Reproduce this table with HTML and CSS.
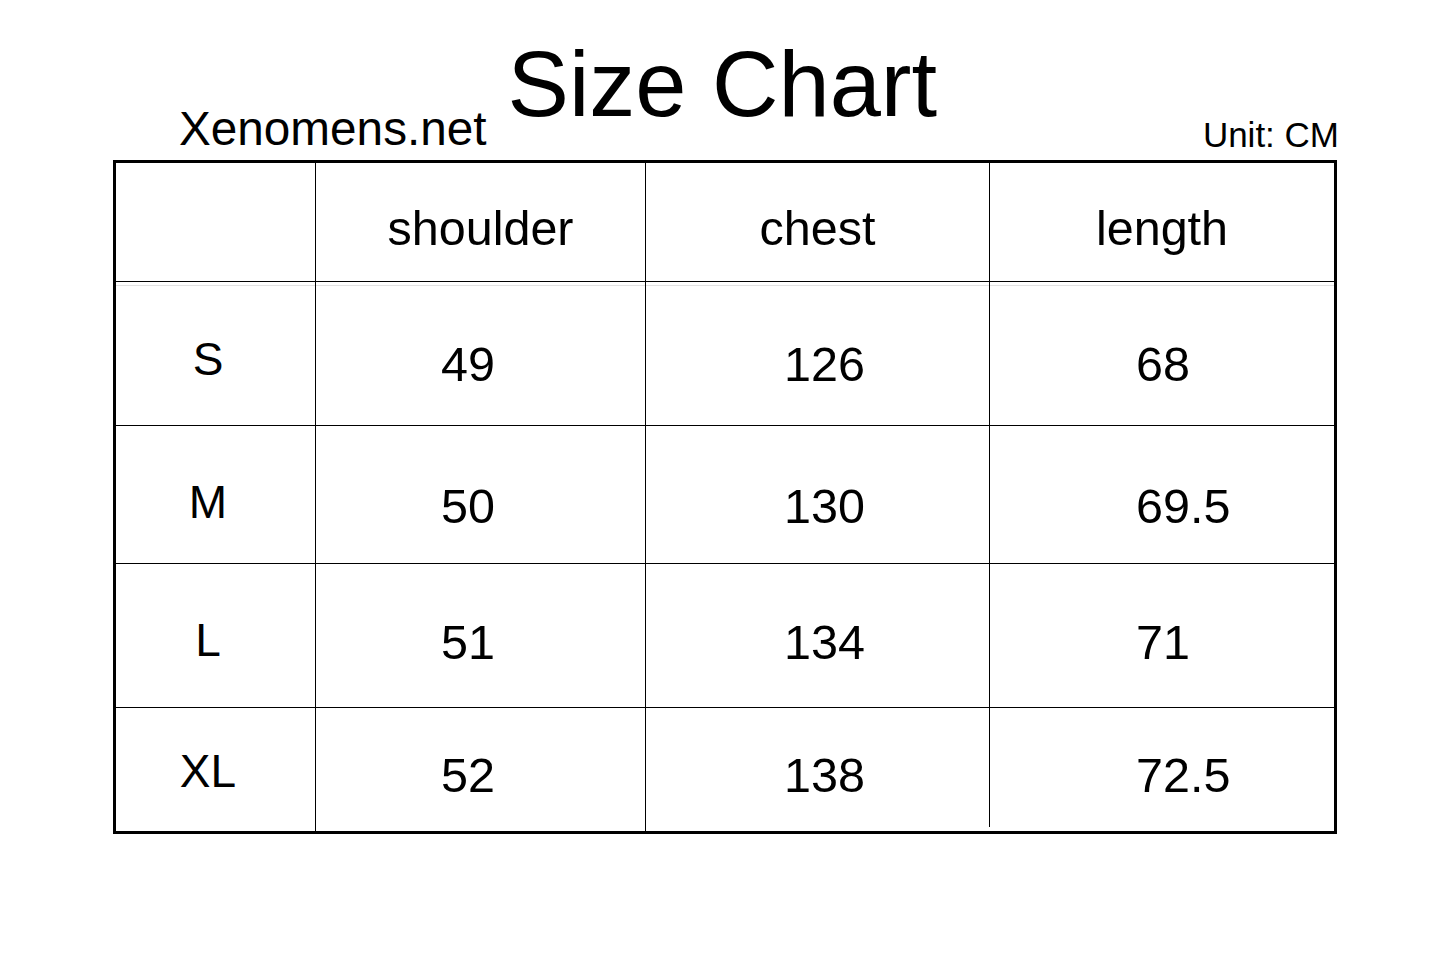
FILE: index.html
```html
<!DOCTYPE html>
<html lang="en">
<head>
<meta charset="utf-8">
<title>Size Chart</title>
<link rel="stylesheet" href="styles.css">
</head>
<body>
<div class="page">
  <header class="top">
    <div class="site">Xenomens.net</div>
    <h1 class="title">Size Chart</h1>
    <div class="unit">Unit: CM</div>
  </header>
  <div class="chart">
    <div class="cell head"></div>
    <div class="cell head">shoulder</div>
    <div class="cell head">chest</div>
    <div class="cell head">length</div>

    <div class="cell size r1 first">S</div>
    <div class="cell num c2 r1 first">49</div>
    <div class="cell num c3 r1 first">126</div>
    <div class="cell num c4 r1 first">68</div>

    <div class="cell size r2">M</div>
    <div class="cell num c2 r2">50</div>
    <div class="cell num c3 r2">130</div>
    <div class="cell num c4 r2">69.5</div>

    <div class="cell size r3">L</div>
    <div class="cell num c2 r3">51</div>
    <div class="cell num c3 r3">134</div>
    <div class="cell num c4 r3">71</div>

    <div class="cell size r4">XL</div>
    <div class="cell num c2 r4">52</div>
    <div class="cell num c3 r4">138</div>
    <div class="cell num c4 r4 last">72.5</div>
  </div>
</div>
</body>
</html>
```
FILE: styles.css
```css
html, body {
  margin: 0;
  padding: 0;
  background: #fff;
}
body {
  font-family: "Liberation Sans", Arial, sans-serif;
  color: #000;
}
.page {
  width: 1440px;
  height: 968px;
}
.top {
  box-sizing: border-box;
  width: 1224px;
  height: 160px;
  margin-left: 113px;
  display: flex;
  align-items: flex-end;
}
.site {
  font-size: 47.7px;
  line-height: 1;
  margin-left: 66px;
  margin-bottom: 7px;
}
.title {
  font-size: 92px;
  font-weight: normal;
  line-height: 1;
  margin: 0 0 30px 21px;
}
.unit {
  font-size: 35px;
  line-height: 1;
  margin-left: auto;
  margin-right: -2px;
  margin-bottom: 8px;
}
.chart {
  margin-left: 113px;
  width: 1224px;
  box-sizing: border-box;
  border: 3px solid #000;
  background: #000;
  display: grid;
  grid-template-columns: 199px 329px 343px 344px;
  grid-template-rows: 118px 143px 137px 143px 123px;
  gap: 1px;
}
.cell {
  background: #fff;
  display: flex;
  align-items: center;
  box-sizing: border-box;
  font-size: 48.5px;
  line-height: 1;
  position: relative;
}
.head {
  justify-content: center;
  padding-top: 12px;
}
.size {
  justify-content: center;
  padding-right: 15px;
  font-size: 46px;
}
.num.c2 { padding-left: 125px; }
.num.c3 { padding-left: 138px; }
.num.c4 { padding-left: 146px; }

.r1.num { padding-top: 21px; }
.r2.num { padding-top: 23px; }
.r3.num { padding-top: 13px; }
.r4.num { padding-top: 11px; }
.r1.size { padding-top: 11px; }
.r2.size { padding-top: 15px; }
.r3.size { padding-top: 9px; }
.r4.size { padding-top: 3px; }

.first {
  background: linear-gradient(to bottom, #fff 0, #fff 3px, #e2e2e2 3px, #e2e2e2 4px, #fff 4px);
}
.last::before {
  content: "";
  position: absolute;
  left: -1px;
  bottom: 0;
  width: 1px;
  height: 4px;
  background: #fff;
}
```
